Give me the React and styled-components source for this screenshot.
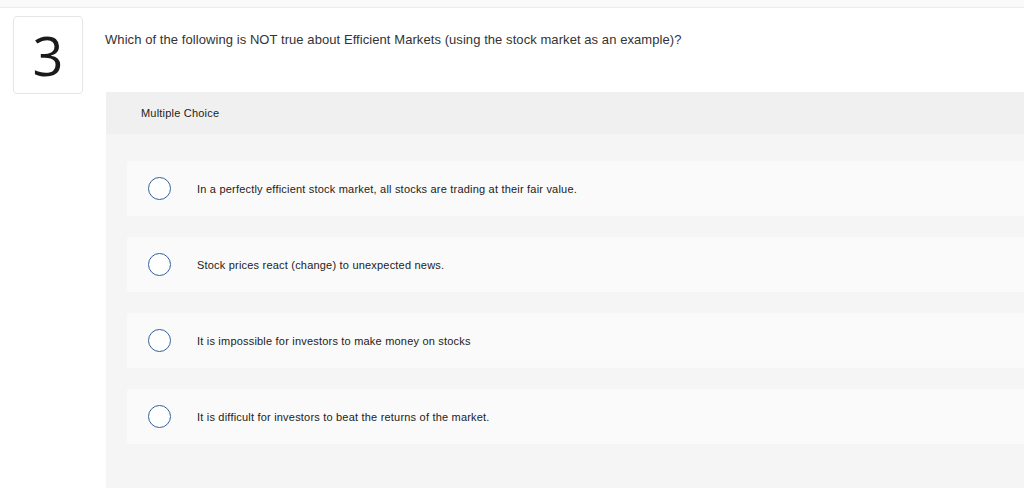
import React from "react";
import styled, { createGlobalStyle } from "styled-components";

const Global = createGlobalStyle`
  html, body { margin: 0; padding: 0; background: #fff; }
  body { font-family: "Liberation Sans", Arial, sans-serif; color: #333; }
`;

const Page = styled.div`
  width: 1024px;
  height: 488px;
  overflow: hidden;
  background: #fff;
`;

const TopStrip = styled.div`
  height: 7px;
  background: #fafafa;
  border-bottom: 1px solid #ececec;
`;

const Question = styled.div`
  display: grid;
  grid-template-columns: 70px 1fr;
  column-gap: 23px;
  padding: 8px 0 0 13px;
`;

const NumberBox = styled.div`
  width: 68px;
  height: 76px;
  border: 1px solid #e6e6e6;
  border-radius: 4px;
  display: flex;
  align-items: center;
  justify-content: center;
  font-size: 54px;
  font-weight: 400;
  color: #1a1a1a;
  font-family: "Open Sans", sans-serif;
  line-height: 1;
`;

const Body = styled.div`
  display: flex;
  flex-direction: column;
`;

const Prompt = styled.div`
  font-size: 13px;
  letter-spacing: 0.07px;
  line-height: 16px;
  padding-top: 16px;
  height: 76px;
  box-sizing: border-box;
  color: #333;
  margin-left: -1px;
`;

const Panel = styled.div`
  background: #f5f5f5;
  height: 396px;
`;

const PanelHeader = styled.div`
  background: #f0f0f0;
  height: 42px;
  display: flex;
  align-items: center;
  padding-left: 35px;
  font-size: 11px;
  letter-spacing: 0.2px;
  color: #222;
`;

const Choices = styled.div`
  display: flex;
  flex-direction: column;
  gap: 21px;
  padding: 27px 0 0 21px;
`;

const Choice = styled.label`
  display: flex;
  align-items: center;
  height: 55px;
  background: #fafafa;
  padding-left: 21px;
  border-radius: 2px 0 0 2px;
`;

const Radio = styled.span`
  box-sizing: border-box;
  width: 23px;
  height: 23px;
  border-radius: 50%;
  border: 1.5px solid #33609a;
  background: #fff;
  flex: none;
`;

const ChoiceText = styled.span`
  margin-left: 26px;
  font-size: 11px;
  letter-spacing: 0.2px;
  color: #222;
`;

const choices = [
  "In a perfectly efficient stock market, all stocks are trading at their fair value.",
  "Stock prices react (change) to unexpected news.",
  "It is impossible for investors to make money on stocks",
  "It is difficult for investors to beat the returns of the market.",
];

export default function App() {
  return (
    <Page>
      <Global />
      <TopStrip />
      <Question>
        <NumberBox>3</NumberBox>
        <Body>
          <Prompt>
            Which of the following is NOT true about Efficient Markets (using the stock market as an example)?
          </Prompt>
          <Panel>
            <PanelHeader>Multiple Choice</PanelHeader>
            <Choices>
              {choices.map((c) => (
                <Choice key={c}>
                  <Radio />
                  <ChoiceText>{c}</ChoiceText>
                </Choice>
              ))}
            </Choices>
          </Panel>
        </Body>
      </Question>
    </Page>
  );
}
